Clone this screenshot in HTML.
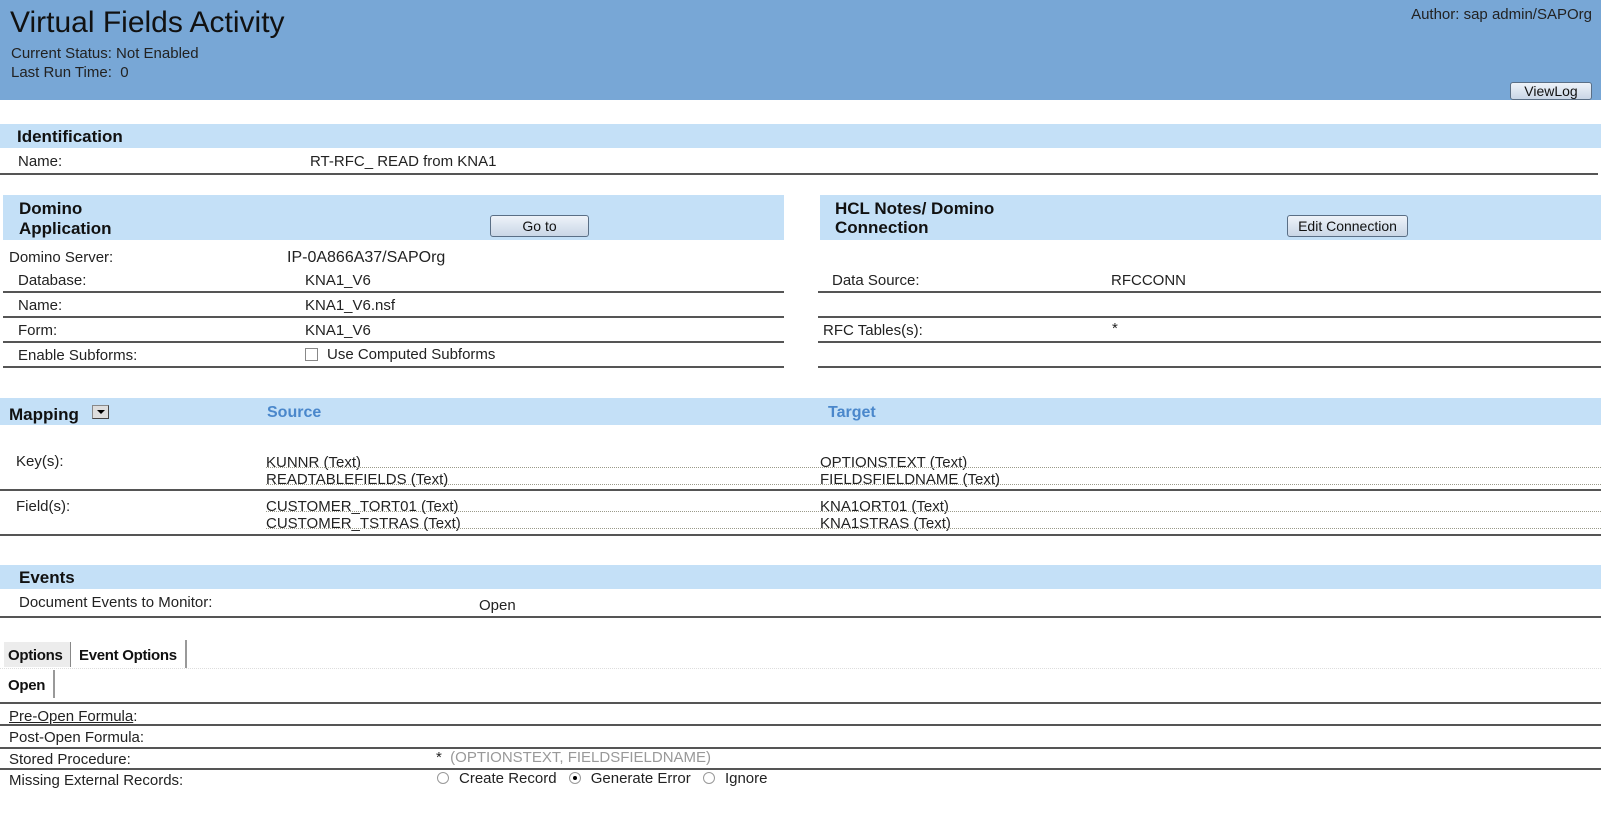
<!DOCTYPE html>
<html><head><meta charset="utf-8"><style>
*{margin:0;padding:0;box-sizing:border-box}
body{width:1601px;height:813px;background:#fff;position:relative;overflow:hidden;font-family:"Liberation Sans",Arial,sans-serif;font-size:15px;color:#222}
.a{position:absolute;white-space:nowrap;line-height:16px;padding-top:1px}
.b{font-weight:bold;font-size:17px;color:#111}
.band{position:absolute;background:#c4e0f7}
.ln{position:absolute;height:2px;background:#555}
.dl{position:absolute;height:0;border-top:1px dotted #9a9a8a}
.btn{position:absolute;border:1px solid #5a6f86;border-radius:3px;background:linear-gradient(#eef3f9,#c9d6e6);font-size:14px;text-align:center;color:#111}
.rad{display:inline-block;width:12px;height:12px;border:1px solid #999;border-radius:50%;vertical-align:-1px;margin-right:10px;position:relative;background:#fff}
</style></head><body>
<div style="position:absolute;left:0;top:0;width:1601px;height:100px;background:#78a7d6"></div>
<div class="a" style="left:10px;top:5px;font-size:30px;line-height:34px;color:#111">Virtual Fields Activity</div>
<div class="a" style="left:11px;top:45px">Current Status: Not Enabled</div>
<div class="a" style="left:11px;top:64px">Last Run Time:&nbsp; 0</div>
<div class="a" style="right:9px;top:6px">Author: sap admin/SAPOrg</div>
<div class="btn" style="left:1510px;top:82px;width:82px;height:18px;line-height:16px">ViewLog</div>

<div class="band" style="left:0;top:124px;width:1601px;height:24px"></div>
<div class="a b" style="left:17px;top:128px">Identification</div>
<div class="a" style="left:18px;top:153px">Name:</div>
<div class="a" style="left:310px;top:153px">RT-RFC_ READ from KNA1</div>
<div class="ln" style="left:0;top:173px;width:1598px"></div>

<div class="band" style="left:3px;top:195px;width:781px;height:45px"></div>
<div class="a b" style="left:19px;top:200px">Domino</div>
<div class="a b" style="left:19px;top:220px">Application</div>
<div class="btn" style="left:490px;top:215px;width:99px;height:22px;line-height:20px">Go to</div>
<div class="band" style="left:820px;top:195px;width:781px;height:45px"></div>
<div class="a b" style="left:835px;top:200px">HCL Notes/ Domino</div>
<div class="a b" style="left:835px;top:219px">Connection</div>
<div class="btn" style="left:1287px;top:215px;width:121px;height:22px;line-height:20px">Edit Connection</div>

<div class="a" style="left:9px;top:249px">Domino Server:</div>
<div class="a" style="left:287px;top:249px;font-size:16px">IP-0A866A37/SAPOrg</div>
<div class="a" style="left:18px;top:272px">Database:</div><div class="a" style="left:305px;top:272px">KNA1_V6</div>
<div class="ln" style="left:3px;top:291px;width:781px"></div>
<div class="a" style="left:18px;top:297px">Name:</div><div class="a" style="left:305px;top:297px">KNA1_V6.nsf</div>
<div class="ln" style="left:3px;top:316px;width:781px"></div>
<div class="a" style="left:18px;top:322px">Form:</div><div class="a" style="left:305px;top:322px">KNA1_V6</div>
<div class="ln" style="left:3px;top:341px;width:781px"></div>
<div class="a" style="left:18px;top:347px">Enable Subforms:</div>
<div style="position:absolute;left:305px;top:348px;width:13px;height:13px;border:1px solid #888;background:#fff"></div>
<div class="a" style="left:327px;top:346px">Use Computed Subforms</div>
<div class="ln" style="left:3px;top:366px;width:781px"></div>

<div class="a" style="left:832px;top:272px">Data Source:</div><div class="a" style="left:1111px;top:272px">RFCCONN</div>
<div class="ln" style="left:818px;top:291px;width:783px"></div>
<div class="ln" style="left:818px;top:316px;width:783px"></div>
<div class="a" style="left:823px;top:322px">RFC Tables(s):</div><div class="a" style="left:1112px;top:320px">*</div>
<div class="ln" style="left:818px;top:341px;width:783px"></div>
<div class="ln" style="left:818px;top:366px;width:783px"></div>

<div class="band" style="left:0;top:398px;width:1601px;height:27px"></div>
<div class="a b" style="left:9px;top:406px">Mapping</div>
<div style="position:absolute;left:92px;top:405px;width:17px;height:14px;background:#ddd;border:1px solid #888;border-right-color:#444;border-bottom-color:#444"><div style="position:absolute;left:4px;top:4px;border-left:4px solid transparent;border-right:4px solid transparent;border-top:4px solid #000"></div></div>
<div class="a" style="left:267px;top:404px;font-weight:bold;font-size:16px;color:#4a87cb">Source</div>
<div class="a" style="left:828px;top:404px;font-weight:bold;font-size:16px;color:#4a87cb">Target</div>

<div class="a" style="left:16px;top:453px">Key(s):</div>
<div class="a" style="left:266px;top:454px">KUNNR (Text)</div>
<div class="a" style="left:266px;top:471px">READTABLEFIELDS (Text)</div>
<div class="a" style="left:820px;top:454px">OPTIONSTEXT (Text)</div>
<div class="a" style="left:820px;top:471px">FIELDSFIELDNAME (Text)</div>
<div class="dl" style="left:266px;top:467px;width:1335px"></div>
<div class="dl" style="left:266px;top:484px;width:1335px"></div>
<div class="ln" style="left:0;top:489px;width:1601px"></div>
<div class="a" style="left:16px;top:498px">Field(s):</div>
<div class="a" style="left:266px;top:498px">CUSTOMER_TORT01 (Text)</div>
<div class="a" style="left:266px;top:515px">CUSTOMER_TSTRAS (Text)</div>
<div class="a" style="left:820px;top:498px">KNA1ORT01 (Text)</div>
<div class="a" style="left:820px;top:515px">KNA1STRAS (Text)</div>
<div class="dl" style="left:266px;top:511px;width:1335px"></div>
<div class="dl" style="left:266px;top:528px;width:1335px"></div>
<div class="ln" style="left:0;top:534px;width:1601px"></div>

<div class="band" style="left:0;top:565px;width:1601px;height:24px"></div>
<div class="a b" style="left:19px;top:569px">Events</div>
<div class="a" style="left:19px;top:594px">Document Events to Monitor:</div>
<div class="a" style="left:479px;top:597px">Open</div>
<div class="ln" style="left:0;top:616px;width:1601px"></div>

<div style="position:absolute;left:4px;top:642px;width:66px;height:25px;background:#ececec"></div>
<div style="position:absolute;left:70px;top:642px;width:1px;height:25px;background:#888"></div>
<div style="position:absolute;left:185px;top:640px;width:2px;height:28px;background:#999"></div>
<div style="position:absolute;left:0;top:668px;width:1601px;height:1px;border-top:1px dotted #ddd"></div>
<div class="a b" style="left:8px;top:647px;font-size:15px;letter-spacing:-0.3px">Options</div>
<div class="a b" style="left:79px;top:647px;font-size:15px;letter-spacing:-0.3px">Event Options</div>
<div style="position:absolute;left:53px;top:670px;width:2px;height:28px;background:#999"></div>
<div class="a b" style="left:8px;top:677px;font-size:15px;letter-spacing:-0.3px">Open</div>
<div class="ln" style="left:0;top:702px;width:1601px"></div>
<div class="a" style="left:9px;top:708px"><u>Pre-Open Formula</u>:</div>
<div class="ln" style="left:0;top:724px;width:1601px"></div>
<div class="a" style="left:9px;top:729px">Post-Open Formula:</div>
<div class="ln" style="left:0;top:747px;width:1601px"></div>
<div class="a" style="left:9px;top:751px">Stored Procedure:</div>
<div class="a" style="left:436px;top:749px;color:#999"><span style="color:#222">*</span>&nbsp; (OPTIONSTEXT, FIELDSFIELDNAME)</div>
<div class="ln" style="left:0;top:768px;width:1601px"></div>
<div class="a" style="left:9px;top:772px">Missing External Records:</div>
<div class="a" style="left:437px;top:770px"><span class="rad"></span>Create Record <span class="rad" style="margin-left:8px"><span style="position:absolute;left:3px;top:3px;width:4px;height:4px;background:#000;border-radius:50%"></span></span>Generate Error <span class="rad" style="margin-left:8px"></span>Ignore</div>
</body></html>
